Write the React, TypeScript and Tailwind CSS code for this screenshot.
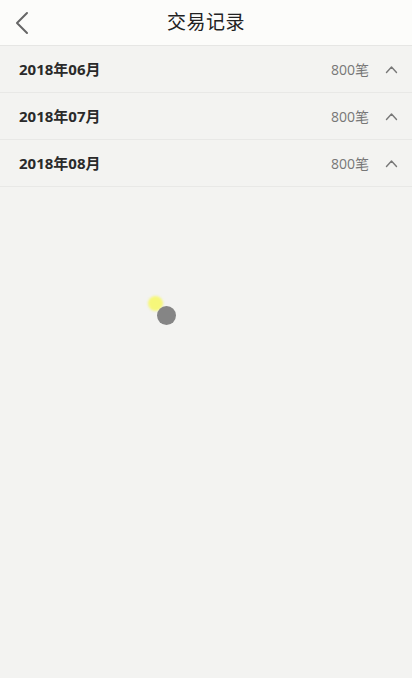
import React from "react";

const rows = ["2018年06月", "2018年07月", "2018年08月"];

export default function App() {
  return (
    <div
      className="relative w-[412px] h-[678px] bg-[#f3f3f1] overflow-hidden"
      style={{ fontFamily: '"Open Sans", "Noto Sans CJK SC", sans-serif' }}
    >
      <div className="relative h-[46px] bg-[#fcfcfa] border-b border-[#e6e6e4] flex items-center justify-center">
        <button className="absolute left-[12px] top-[11px] w-[20px] h-[24px] flex items-center justify-center">
          <svg width="16" height="24" viewBox="0 0 16 24" fill="none">
            <path d="M13 2 L3 12 L13 22" stroke="#666" strokeWidth="2" strokeLinecap="round" strokeLinejoin="round" />
          </svg>
        </button>
        <span className="text-[19px] text-[#222] tracking-[0.5px]">交易记录</span>
      </div>
      {rows.map((r) => (
        <div key={r} className="h-[47px] flex items-center border-b border-[#e8e8e6] pl-[19px] pr-[14px]">
          <span className="text-[15px] font-bold text-[#2a2a2a]">{r}</span>
          <span className="ml-auto text-[14px] text-[#777]">800笔</span>
          <svg className="ml-[16px]" width="13" height="9" viewBox="0 0 13 9" fill="none">
            <path d="M1.5 7.5 L6.5 2 L11.5 7.5" stroke="#777" strokeWidth="1.4" strokeLinecap="round" strokeLinejoin="round" />
          </svg>
        </div>
      ))}
      <div className="absolute left-[148px] top-[296px] w-[15px] h-[15px] rounded-full bg-[#f6f77a] blur-[1px]" />
      <div className="absolute left-[157px] top-[306px] w-[19px] h-[19px] rounded-full bg-[#858585]" />
    </div>
  );
}
